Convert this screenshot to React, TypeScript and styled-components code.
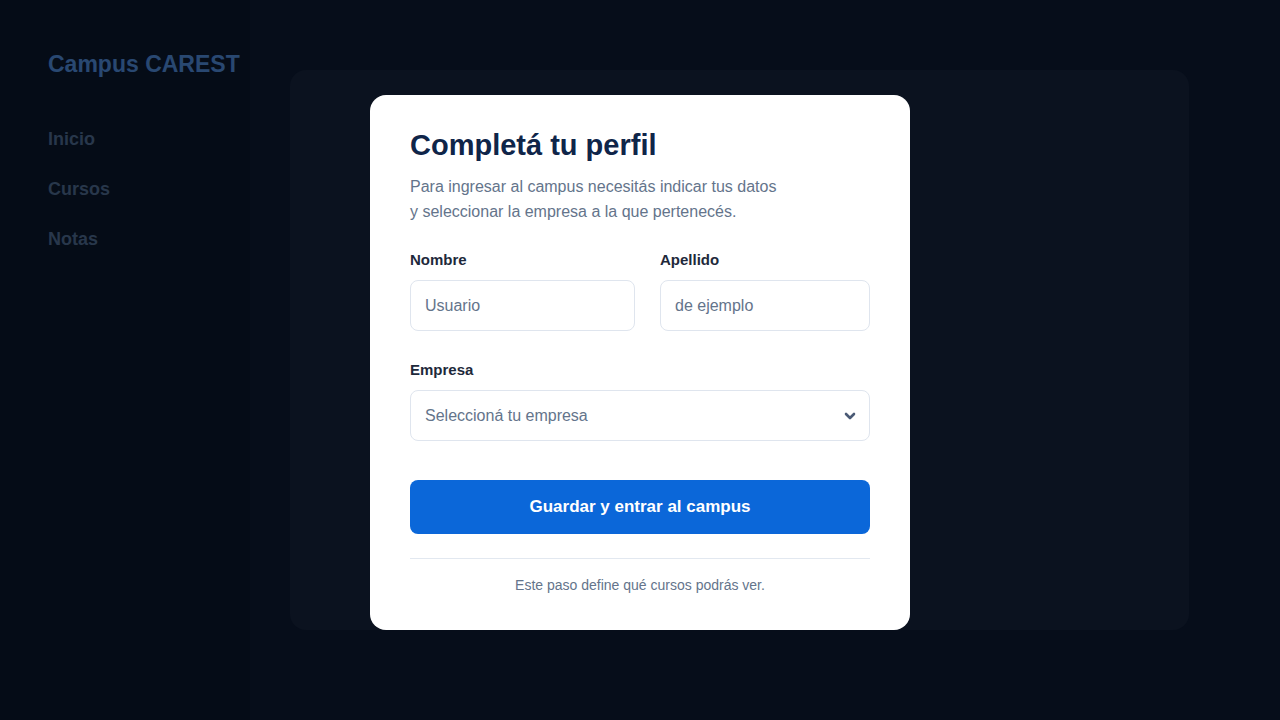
import styled, { createGlobalStyle } from "styled-components";

const GlobalStyle = createGlobalStyle`
  * {
    box-sizing: border-box;
  }

  body {
    margin: 0;
    font-family: "Liberation Sans", Arial, sans-serif;
    background: #0c1a34;
  }
`;

const Page = styled.div`
  display: flex;
  width: 100%;
  height: 720px;
  background: #0c1a34;
`;

const Sidebar = styled.aside`
  width: 250px;
  flex-shrink: 0;
  padding: 51px 0 0 48px;
  background: #0a182e;

  ul {
    display: flex;
    flex-direction: column;
    gap: 29px;
    margin: 51px 0 0;
    padding: 0;
  }

  li {
    list-style: none;
    font-size: 18px;
    line-height: 21px;
    font-weight: bold;
    color: #506e96;
  }
`;

const Brand = styled.h1`
  margin: 0;
  font-size: 23px;
  line-height: 27px;
  font-weight: bold;
  color: #5290e2;
  white-space: nowrap;
`;

const Main = styled.main`
  flex: 1;
  padding: 70px 91px 90px 40px;
`;

const Panel = styled.section`
  height: 560px;
  border-radius: 16px;
  background: #16243e;
`;

const Backdrop = styled.div`
  position: fixed;
  inset: 0;
  display: flex;
  justify-content: center;
  align-items: flex-start;
  padding-top: 95px;
  background: rgba(0, 0, 0, 0.5);
`;

const Modal = styled.div`
  width: 540px;
  padding: 33px 40px 36px;
  border-radius: 16px;
  background: #ffffff;
`;

const Title = styled.h2`
  margin: 0;
  font-size: 29px;
  line-height: 34px;
  font-weight: bold;
  color: #0f2549;
`;

const Subtitle = styled.p`
  margin: 12px 0 0;
  font-size: 16px;
  line-height: 25px;
  color: #64748b;
`;

const Row = styled.div`
  display: grid;
  grid-template-columns: 225px 1fr;
  gap: 25px;
  margin-top: 27px;
`;

const Field = styled.div<{ $top?: number }>`
  display: flex;
  flex-direction: column;
  margin-top: ${(p) => p.$top ?? 0}px;
`;

const Label = styled.label`
  font-size: 15px;
  line-height: 17px;
  font-weight: bold;
  color: #1e293b;
  margin-bottom: 12px;
`;

const Input = styled.div`
  height: 51px;
  display: flex;
  align-items: center;
  padding: 0 14px;
  border: 1.5px solid #dfe5ee;
  border-radius: 8px;
  font-size: 16px;
  color: #64748b;
`;

const Select = styled(Input)`
  justify-content: space-between;
  padding-right: 12px;
`;

const Button = styled.button`
  width: 100%;
  height: 54px;
  margin-top: 39px;
  border: none;
  border-radius: 8px;
  background: #0b67d9;
  color: #ffffff;
  font-family: "Liberation Sans", Arial, sans-serif;
  font-size: 17px;
  font-weight: bold;
`;

const Divider = styled.hr`
  margin: 24px 0 0;
  border: none;
  border-top: 1px solid #e2e8f0;
`;

const Note = styled.p`
  margin: 18px 0 0;
  text-align: center;
  font-size: 14px;
  line-height: 17px;
  color: #64748b;
`;

const Chevron = () => (
  <svg width="14" height="14" viewBox="0 0 14 14" fill="none">
    <path d="M3 5 L7 9 L11 5" stroke="#4a5a75" strokeWidth="2.6" strokeLinecap="round" strokeLinejoin="round" />
  </svg>
);

const App = () => {
  return (
    <>
      <GlobalStyle />
      <Page>
        <Sidebar>
          <Brand>Campus CAREST</Brand>
          <ul>
            <li>Inicio</li>
            <li>Cursos</li>
            <li>Notas</li>
          </ul>
        </Sidebar>
        <Main>
          <Panel />
        </Main>
      </Page>
      <Backdrop>
        <Modal>
          <Title>Completá tu perfil</Title>
          <Subtitle>
            Para ingresar al campus necesitás indicar tus datos
            <br />y seleccionar la empresa a la que pertenecés.
          </Subtitle>
          <Row>
            <Field>
              <Label>Nombre</Label>
              <Input>Usuario</Input>
            </Field>
            <Field>
              <Label>Apellido</Label>
              <Input>de ejemplo</Input>
            </Field>
          </Row>
          <Field $top={30}>
            <Label>Empresa</Label>
            <Select>
              Seleccioná tu empresa
              <Chevron />
            </Select>
          </Field>
          <Button>Guardar y entrar al campus</Button>
          <Divider />
          <Note>Este paso define qué cursos podrás ver.</Note>
        </Modal>
      </Backdrop>
    </>
  );
};

export default App;
